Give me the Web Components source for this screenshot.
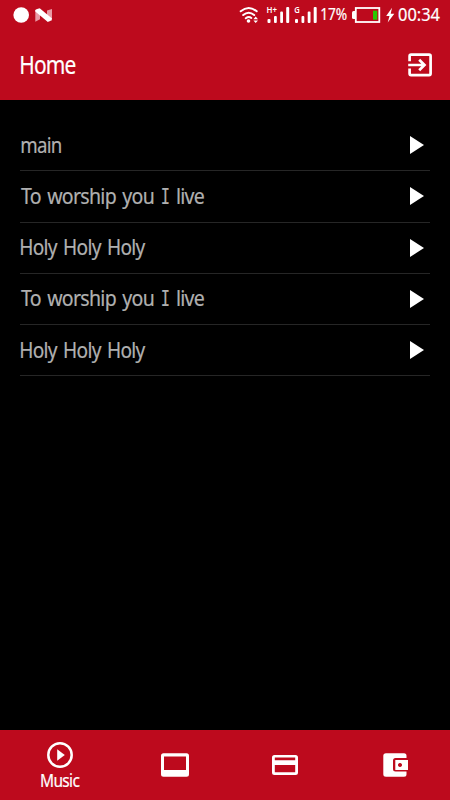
<!DOCTYPE html>
<html lang="en">
<head>
<meta charset="utf-8">
<title>Home</title>
<style>
	html, body {
		margin: 0;
		height: 100%;
		background: #000;
		font-family: "Noto Sans", sans-serif;
	}
</style>
</head>
<body>

<template id="fit-text-template">
	<style>
		:host {
			display: block;
			flex: none;
		}

		span {
			display: inline-block;
			white-space: pre;
			word-spacing: 0.1em;
			transform-origin: 0 50%;
			-webkit-text-stroke: 0.2px currentColor;
		}

		/* capital I with serifs */
		b {
			display: inline-block;
			font-family: "DejaVu Sans Mono", monospace;
			font-weight: normal;
			font-size: 0.98em;
			line-height: 1;
			letter-spacing: 0;
			transform: scaleX(0.8);
			margin: 0 -0.06em;
		}
	</style>
	<span></span>
</template>

<template id="status-bar-template">
	<style>
		:host {
			display: flex;
			align-items: center;
			height: 30px;
			color: #fff;
		}

		svg {
			display: block;
			flex: none;
		}

		.left {
			margin-right: auto;
		}

		.percent {
			margin: 0 0 2px 4px;
		}

		.battery {
			margin-left: 4px;
		}

		.clock {
			margin-right: 10px;
		}
	</style>
	<svg class="left" width="60" height="30" viewBox="0 0 60 30">
		<circle cx="21.200" cy="15" r="7.800" fill="#fff"/>
		<path d="M35.300 10L40 8.500v10.700l-4.700 2.500zM47 10.500l5-1.500v11.500l-5 1z" fill="#e89aa5"/>
		<path d="M35.300 10Q37.500 8 40 8.500L52 18.500Q51 21.500 47.500 21.700L35.300 11.500z" fill="#fff"/>
	</svg>
	<svg width="78" height="30" viewBox="238 0 78 30">
		<g fill="none" stroke="#fff" stroke-width="2" stroke-linecap="round">
			<path d="M239.700 11.300q8-6.600 16 0M242.200 15q5.500-4.500 11 0M244.800 18.300q3-2.300 5.500-.3"/>
		</g>
		<circle cx="247.500" cy="21" r="1.800" fill="#fff"/>
		<path d="M254.700 16.500l2.300 2.800h-4.600zM252.400 20.500h4.600l-2.300 2.500z" fill="#fff"/>
		<g fill="#fff">
			<rect x="266.500" y="19" width="3" height="4" rx="1"/>
			<rect x="273" y="16" width="2.800" height="7" rx="1"/>
			<rect x="279.200" y="11.500" width="2.800" height="11.500" rx="1"/>
			<rect x="285.200" y="7" width="3" height="16" rx="1"/>
			<rect x="294" y="19" width="3" height="4" rx="1"/>
			<rect x="300.500" y="16" width="2.800" height="7" rx="1"/>
			<rect x="306.700" y="11.500" width="2.800" height="11.500" rx="1"/>
			<rect x="312.700" y="7" width="3" height="16" rx="1"/>
			<text x="265.500" y="12.500" font-size="8" font-weight="600" textLength="10.500" lengthAdjust="spacingAndGlyphs">H+</text>
			<text x="293.200" y="12.500" font-size="8" font-weight="600" textLength="5.500" lengthAdjust="spacingAndGlyphs">G</text>
		</g>
	</svg>
	<fit-text class="percent" text="17%" size="16" width="26"></fit-text>
	<svg class="battery" width="47" height="30" viewBox="350 0 47 30">
		<rect x="354.800" y="8" width="23.500" height="14" fill="none" stroke="#fff" stroke-width="1.800"/>
		<path d="M354 11h-1.500q-1.500 0-1.500 1.500v5q0 1.500 1.500 1.500h1.500z" fill="#fff"/>
		<rect x="372" y="10.700" width="4.300" height="9" fill="#28c800"/>
		<path d="M391 7.700l-5.800 8.300h3.300l-1.800 6.500 6.600-8.800h-3.600z" fill="#fff"/>
	</svg>
	<fit-text class="clock" text="00:34" size="17.5" width="42"></fit-text>
</template>

<template id="app-header-template">
	<style>
		:host {
			display: flex;
			flex-direction: column;
			height: 100px;
			background: #bd0a1d;
			color: #fff;
		}

		.title-bar {
			flex: 1;
			display: flex;
			align-items: center;
			justify-content: space-between;
			padding: 0 16px 0 21px;
		}

		::slotted(*) {
			margin-bottom: 2px;
		}

		svg {
			display: block;
		}
	</style>
	<status-bar></status-bar>
	<div class="title-bar">
		<slot></slot>
		<svg width="28" height="28" viewBox="0 0 28 28" fill="none" stroke="#fff" stroke-width="2.700">
			<path d="M3.600 10.300V5.200q0-1.500 1.500-1.500h18q1.500 0 1.500 1.500v17.400q0 1.500-1.500 1.500h-18q-1.500 0-1.500-1.500v-5.100"/>
			<path d="M2.200 14H18M13.200 8.700L18.500 14l-5.300 5.300"/>
		</svg>
	</div>
</template>

<template id="song-row-template">
	<style>
		:host {
			display: flex;
			align-items: center;
			justify-content: space-between;
			box-sizing: border-box;
			height: 51.250px;
			padding: 0 6px 0 0.500px;
			border-bottom: 1px solid #262626;
			color: #b0b0b0;
		}

		::slotted(*) {
			margin-bottom: 1px;
		}

		svg {
			display: block;
		}
	</style>
	<slot></slot>
	<svg width="14" height="18" viewBox="0 0 14 18">
		<path d="M0 0l14 9-14 9z" fill="#fff"/>
	</svg>
</template>

<template id="tab-item-template">
	<style>
		:host {
			display: flex;
			flex-direction: column;
			align-items: center;
			justify-content: center;
			height: 70px;
			color: #fff;
		}

		:host([active]) {
			box-sizing: border-box;
			padding-top: 4px;
		}

		::slotted(svg) {
			display: block;
			flex: none;
		}
	</style>
	<slot></slot>
</template>

<template id="tab-bar-template">
	<style>
		:host {
			display: grid;
			grid-template-columns: 120px 110px 110px 110px;
			height: 70px;
			background: #bd0a1d;
		}
	</style>
	<slot></slot>
</template>

<template id="music-app-template">
	<style>
		:host {
			display: flex;
			flex-direction: column;
			height: 800px;
			overflow: hidden;
		}

		main {
			flex: 1;
			padding: 20px 20px 0;
		}
	</style>
	<slot name="header"></slot>
	<main><slot></slot></main>
	<slot name="tabs"></slot>
</template>

<music-app>
	<app-header slot="header">
		<fit-text text="Home" size="25" width="54.5" spacing="-1"></fit-text>
	</app-header>

	<song-row><fit-text text="main" size="22" width="40" spacing="-0.8"></fit-text></song-row>
	<song-row><fit-text text="To worship you I live" size="22" width="183.5" spacing="-0.8"></fit-text></song-row>
	<song-row><fit-text text="Holy Holy Holy" size="22" width="125" spacing="-0.8"></fit-text></song-row>
	<song-row><fit-text text="To worship you I live" size="22" width="183.5" spacing="-0.8"></fit-text></song-row>
	<song-row><fit-text text="Holy Holy Holy" size="22" width="125" spacing="-0.8"></fit-text></song-row>

	<tab-bar slot="tabs">
		<tab-item active>
			<svg width="28" height="28" viewBox="0 0 28 28">
				<circle cx="14" cy="14" r="11.700" fill="none" stroke="#fff" stroke-width="2.500"/>
				<path d="M11.200 8.200L18.800 14l-7.600 5.800z" fill="#fff"/>
			</svg>
			<fit-text text="Music" size="17.5" width="38.5" spacing="-0.8"></fit-text>
		</tab-item>
		<tab-item>
			<svg width="30" height="30" viewBox="0 0 30 30">
				<path fill="#fff" fill-rule="evenodd" d="M3.500 3.300h23q2.500 0 2.500 2.500v18.400q0 2.500-2.500 2.500h-23q-2.500 0-2.500-2.500V5.800q0-2.500 2.500-2.500zM4 6.500V20h22V6.500z"/>
			</svg>
		</tab-item>
		<tab-item>
			<svg width="30" height="30" viewBox="0 0 30 30">
				<path fill="#fff" fill-rule="evenodd" d="M4.500 4.900h21q2.500 0 2.500 2.500v15.200q0 2.500-2.500 2.500h-21Q2 25.100 2 22.600V7.400q0-2.500 2.500-2.500zM4.800 7.500v2.700h20.400V7.500zM4.800 15v7.300h20.400V15z"/>
			</svg>
		</tab-item>
		<tab-item>
			<svg width="30" height="30" viewBox="0 0 30 30">
				<path fill="#fff" d="M26.500 21.500v2.700q0 2.500-2.500 2.500H6q-2.700 0-2.700-2.500V5.800q0-2.500 2.700-2.500h18q2.500 0 2.500 2.500v2.100H15.500q-2.500 0-2.500 2.500v8.600q0 2.500 2.500 2.500z"/>
				<path fill="#fff" fill-rule="evenodd" d="M15.300 10.100H28v9.900H15.300zM20 13a2 2 0 1 0 .01 0z"/>
			</svg>
		</tab-item>
	</tab-bar>
</music-app>

<script>
	class TemplateElement extends HTMLElement {
		constructor() {
			super();
			this.attachShadow({mode: 'open'});
			const template = document.getElementById(this.localName + '-template').content;
			this.shadowRoot.appendChild(document.importNode(template, true));
		}
	}

	// Scales a line of text so that its visible ink fills the given width
	class FitText extends TemplateElement {
		connectedCallback() {
			const text = this.getAttribute('text');
			const size = parseFloat(this.getAttribute('size'));
			const width = parseFloat(this.getAttribute('width'));
			const spacing = parseFloat(this.getAttribute('spacing') || '0');
			const span = this.shadowRoot.querySelector('span');

			span.innerHTML = text.replace('I', '<b>I</b>');
			span.style.font = `${size}px/1.36 "Noto Sans", sans-serif`;
			span.style.letterSpacing = `${spacing}px`;
			this.style.width = `${width}px`;
			this.style.height = `${size * 1.36}px`;

			const ctx = document.createElement('canvas').getContext('2d');
			ctx.font = `${size}px "Noto Sans", sans-serif`;
			const first = ctx.measureText(text[0]);
			const last = ctx.measureText(text[text.length - 1]);
			const left = -first.actualBoundingBoxLeft;
			const right = last.width - last.actualBoundingBoxRight + spacing;
			const ink = span.getBoundingClientRect().width - left - right;
			span.style.transform = `scaleX(${width / ink}) translateX(${-left}px)`;
		}
	}

	customElements.define('status-bar', class extends TemplateElement {});
	customElements.define('app-header', class extends TemplateElement {});
	customElements.define('song-row', class extends TemplateElement {});
	customElements.define('tab-item', class extends TemplateElement {});
	customElements.define('tab-bar', class extends TemplateElement {});
	customElements.define('music-app', class extends TemplateElement {});
	customElements.define('fit-text', FitText);
</script>
</body>
</html>
